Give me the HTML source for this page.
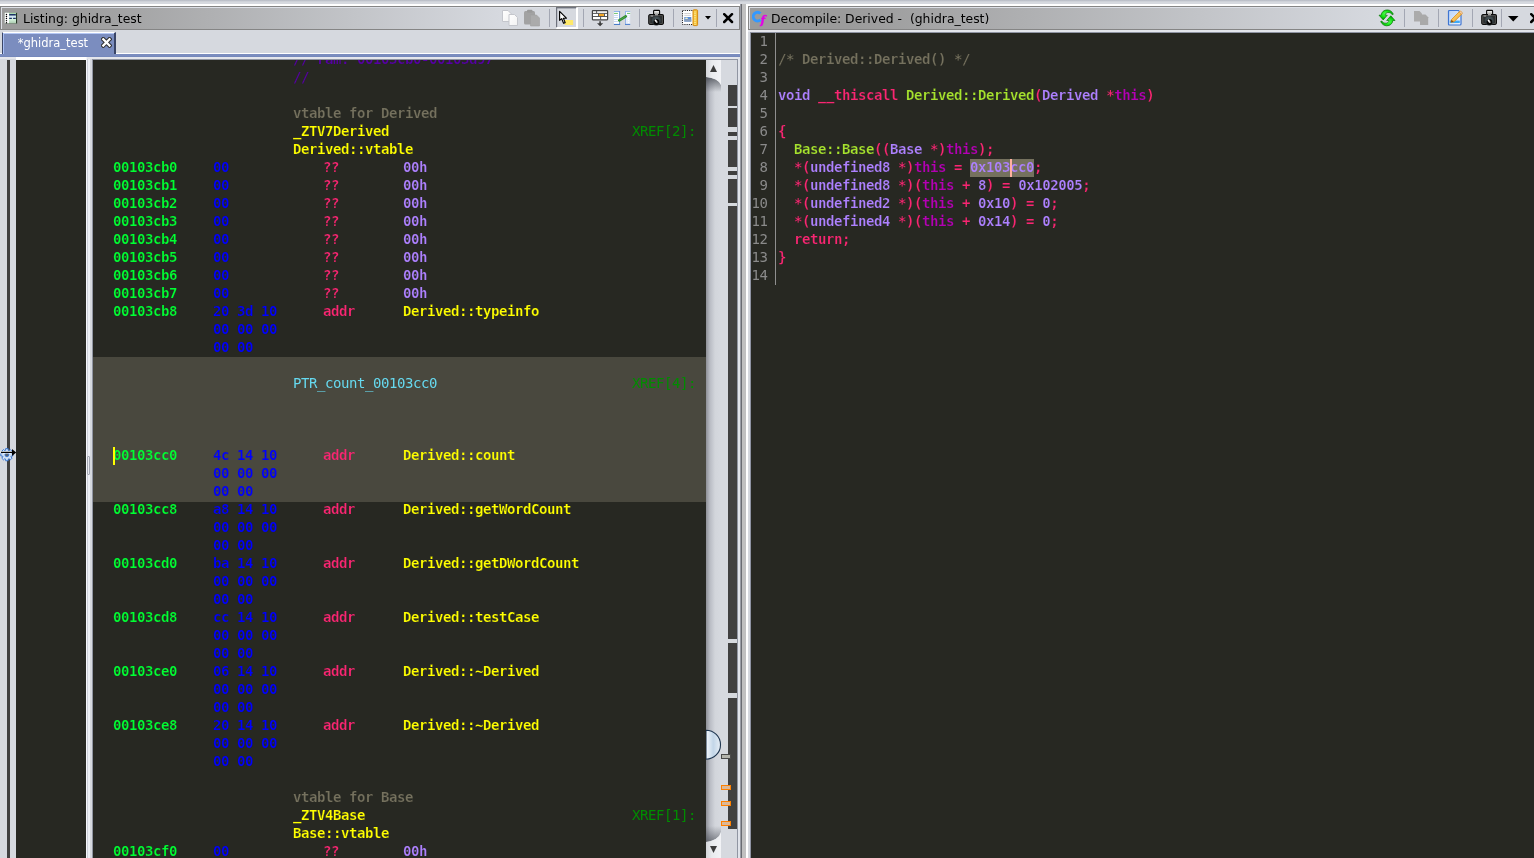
<!DOCTYPE html>
<html><head><meta charset="utf-8"><title>Ghidra</title>
<style>
*{margin:0;padding:0;box-sizing:border-box}
html,body{width:1534px;height:858px;overflow:hidden;background:#d6d9df}
body{position:relative;font-family:"DejaVu Sans","Liberation Sans",sans-serif;font-size:12.4px;color:#000}
.a{position:absolute}
.tx{will-change:transform}
.mono{font-family:"DejaVu Sans Mono","Liberation Mono",monospace;font-size:14px;letter-spacing:-0.4287px;font-weight:bold;white-space:pre;-webkit-text-stroke:0.22px #272822;paint-order:fill stroke}
.hb{-webkit-text-stroke-color:#49483e}
.ht{-webkit-text-stroke-color:#75715e}
.row{position:absolute;left:0;width:613px;height:18px;line-height:18px}
.row span{position:absolute;top:0}
.g{color:#00ff33}.b{color:#0000ff}.p{color:#f92672}.v{color:#ae81ff}.y{color:#ffff00}
.c{color:#75715e}.x{color:#008c00;font-weight:normal;-webkit-text-stroke:0}.l{color:#66d9ef;font-weight:normal;-webkit-text-stroke:0}.dp{color:#5600a4}
.dl{position:absolute;left:0;height:18px;line-height:18px}
.ln{position:absolute;width:18px;text-align:right;font-weight:normal;color:#8a8a8a;left:-1.6px;-webkit-text-stroke:0}
.k{color:#ae81ff}.f{color:#a6e22e}.t{color:#b400b4}.s{color:#f92672}
.hl{background:#75715e}
</style></head><body><div id="root" class="a" style="left:0;top:0;width:1534px;height:858px;will-change:transform">
<!-- top strip -->
<div class="a" style="left:0;top:0;width:1534px;height:4px;background:linear-gradient(#b4b8c2,#d6d9df 2px)"></div>
<div class="a" style="left:0;top:4px;width:1534px;height:2px;background:#fff"></div>

<!-- LEFT title bar -->
<div class="a" style="left:0;top:6px;width:740px;height:24px;border:1px solid #858585;background:linear-gradient(90deg,#9b9b9b 0,#9b9b9b 60px,#d6d9df 500px)"></div>
<div class="a" style="left:1px;top:7px;width:738px;height:1px;background:#dcdfe6"></div>
<div class="a" style="left:1px;top:7px;width:1px;height:22px;background:#dcdfe6"></div>
<svg class="a" style="left:4px;top:12px" width="14" height="12" viewBox="0 0 14 12"><defs><linearGradient id="lg" x1="0" x2="0" y1="0" y2="1"><stop offset="0" stop-color="#a6d8a8"/><stop offset="0.6" stop-color="#d6f4de"/><stop offset="1" stop-color="#a8c8ac"/></linearGradient></defs><rect x="0.8" y="0.8" width="12.300" height="10.800" fill="url(#lg)"/><rect x="0.8" y="0.8" width="4.2" height="10.8" fill="#fff"/><rect x="5.2" y="2" width="6.6" height="1.7" fill="#1c2f66"/><rect x="5.2" y="3.7" width="6.6" height="2.1" fill="#cfe4f6"/><rect x="5.2" y="5.8" width="2.7" height="1.2" fill="#1c2f66"/><rect x="9.1" y="5.8" width="2.7" height="1.2" fill="#1c2f66"/><rect x="12" y="0.8" width="1.1" height="10.8" fill="#243524"/><rect x="0.8" y="11.1" width="12.3" height="0.6" fill="#6a786a"/><circle cx="2.45" cy="2.45" r="0.72" fill="#000"/><circle cx="2.45" cy="4.51" r="0.72" fill="#000"/><circle cx="2.45" cy="6.57" r="0.72" fill="#000"/><circle cx="2.45" cy="8.63" r="0.72" fill="#000"/><circle cx="2.45" cy="10.69" r="0.72" fill="#000"/></svg>
<div class="a" style="left:23px;top:10px;height:18px;line-height:18px">Listing: ghidra_test</div>
<svg class="a" style="left:501px;top:9px" width="18" height="18" viewBox="0 0 18 18"><defs><linearGradient id="pg" x1="0" y1="0" x2="1" y2="1"><stop offset="0" stop-color="#fff"/><stop offset="1" stop-color="#f2f2f2"/></linearGradient></defs><path d="M1.5 1.5 h5.5 l3 3 v8 h-8.5 z" fill="url(#pg)" stroke="#c4c6cc" stroke-width="1" stroke-linejoin="round"/><path d="M8 5.5 h5.5 l3 3 v8 h-8.5 z" fill="url(#pg)" stroke="#c4c6cc" stroke-width="1" stroke-linejoin="round"/></svg><svg class="a" style="left:523px;top:9px" width="18" height="18" viewBox="0 0 18 18"><rect x="1" y="2" width="11" height="13.5" rx="1.5" fill="#a2a2a2"/><rect x="4" y="0.8" width="5.5" height="3" rx="1" fill="#9a9a9a"/><path d="M7.5 6 h6 l3 3 v8 h-9 z" fill="#ababab" stroke="#a0a0a0" stroke-width="0.6"/></svg><div class="a" style="left:549px;top:9px;width:1px;height:18px;background:#a3a7b3"></div><svg class="a" style="left:556px;top:7px" width="22" height="22" viewBox="0 0 22 22"><rect x="0" y="0" width="22" height="22" fill="#d6d9df"/><rect x="0" y="0" width="20.5" height="1.4" fill="#6e727c"/><rect x="0" y="0" width="1.2" height="21" fill="#6e727c"/><rect x="0.3" y="20" width="21.7" height="2" fill="#fff"/><rect x="20" y="0.6" width="2" height="21.4" fill="#fff"/><rect x="8.7" y="13" width="8.4" height="5" fill="#ffe96a"/><path d="M3.6 4.4 L3.6 13.3 L5.7 11.7 L7.6 16.3 L9.2 15.6 L7.4 11.2 L10.4 11.2 Z" fill="#fff" stroke="#000" stroke-width="1.15" stroke-linejoin="round"/></svg><div class="a" style="left:583px;top:9px;width:1px;height:18px;background:#a3a7b3"></div><svg class="a" style="left:591px;top:9px" width="18" height="18" viewBox="0 0 18 18"><rect x="1.4" y="1.6" width="15.2" height="9.2" rx="0.5" fill="#fff" stroke="#444" stroke-width="1.2"/><rect x="1.5" y="3.9" width="15" height="0.9" fill="#444"/><rect x="1.5" y="7.1" width="15" height="0.9" fill="#444"/><rect x="5.2" y="1.5" width="0.9" height="2.6" fill="#444"/><rect x="7" y="4.6" width="0.9" height="2.6" fill="#444"/><rect x="13" y="4.6" width="0.9" height="2.6" fill="#444"/><rect x="9.2" y="7.8" width="0.9" height="2.6" fill="#444"/><rect x="8" y="4.9" width="4.9" height="2.1" fill="#f5a623"/><path d="M8.3 12.2 h1.6 v2 h2.3 l-3.1 3 l-3.1 -3 h2.3 z" fill="#3c3c3c"/></svg><svg class="a" style="left:613px;top:10px" width="18" height="16" viewBox="0 0 18 16"><rect x="0.9" y="1" width="6.2" height="14" rx="0.8" fill="#fff"/><rect x="0.9" y="1" width="6.2" height="1" fill="#8fb4ea"/><rect x="6.2" y="1.3" width="0.9" height="13.4" fill="#5b8ad0"/><rect x="0.9" y="13.9" width="6.2" height="1.1" fill="#4a7cc8"/><rect x="1" y="2.9" width="3.9" height="1" fill="#6cc06c"/><rect x="1" y="5.2" width="3.900" height="0.800" fill="#bcd0f0"/><rect x="1" y="7.2" width="3.900" height="0.800" fill="#bcd0f0"/><rect x="1" y="9.2" width="3.900" height="0.800" fill="#bcd0f0"/><rect x="1" y="11.2" width="3.900" height="0.800" fill="#bcd0f0"/><rect x="12" y="1" width="5.2" height="14" rx="0.8" fill="#e6eefb"/><rect x="12" y="1" width="5.2" height="1" fill="#9bbcee"/><rect x="12" y="1.3" width="0.9" height="13.4" fill="#8fb0e8"/><rect x="12" y="13.9" width="5.2" height="1.1" fill="#5585d0"/><rect x="13" y="2" width="4.2" height="2.6" fill="#fff"/><rect x="14" y="2.9" width="3.2" height="1" fill="#6cc06c"/><rect x="15" y="5.9" width="1" height="1" fill="#fff"/><rect x="15" y="7.9" width="1" height="1" fill="#fff"/><rect x="15" y="9.9" width="1" height="1" fill="#fff"/><rect x="15" y="11.9" width="1" height="1" fill="#fff"/><path d="M6.3 10.400 L12.700 6.400" stroke="#2e8b2e" stroke-width="2.700" stroke-linecap="round"/><path d="M6.8 10.1 L12.2 6.7" stroke="#58b058" stroke-width="0.8" stroke-dasharray="1.2 0.9" stroke-linecap="round"/></svg><div class="a" style="left:639px;top:9px;width:1px;height:18px;background:#a3a7b3"></div><svg class="a" style="left:648px;top:9px" width="17" height="18" viewBox="0 0 17 18"><defs><radialGradient id="ln" cx="0.5" cy="0.35" r="0.75"><stop offset="0" stop-color="#4a565b"/><stop offset="0.55" stop-color="#394347"/><stop offset="1" stop-color="#14181a"/></radialGradient><linearGradient id="fl" x1="0" x2="0" y1="0" y2="1"><stop offset="0" stop-color="#fff"/><stop offset="1" stop-color="#8a8a86"/></linearGradient></defs><rect x="5.6" y="1.4" width="6" height="5" rx="0.8" fill="url(#fl)" stroke="#0a0a0a" stroke-width="1.1"/><rect x="0.8" y="5.700" width="14.600" height="9.600" rx="1.2" fill="#2c2f30" stroke="#0a0a0a" stroke-width="1.2"/><rect x="1.8" y="6.7" width="12.6" height="7.6" fill="none" stroke="#5c5c5a" stroke-width="0.7"/><rect x="7" y="5.3" width="3" height="0.9" fill="#e4e4e4"/><rect x="2.6" y="6.6" width="2.6" height="0.8" fill="#d8d8d4"/><circle cx="8.3" cy="11.9" r="4.7" fill="url(#ln)"/><circle cx="8.4" cy="13" r="2.9" fill="#050505"/><ellipse cx="8.2" cy="12.4" rx="0.9" ry="1.9" transform="rotate(-40 8.2 12.4)" fill="#dcdcdc"/><circle cx="7.5" cy="11.4" r="0.8" fill="#fff"/></svg><div class="a" style="left:673px;top:9px;width:1px;height:18px;background:#a3a7b3"></div><svg class="a" style="left:681px;top:9px" width="18" height="18" viewBox="0 0 18 18"><rect x="1.5" y="1.5" width="11" height="14" fill="#fff" stroke="#222" stroke-width="1" stroke-dasharray="1.1 1.1"/><rect x="3.3" y="4" width="6.5" height="0.9" fill="#d0d0d0"/><rect x="3.3" y="5.9" width="6.5" height="0.9" fill="#d0d0d0"/><rect x="3.3" y="8" width="7" height="4.6" fill="#5b8fd8"/><rect x="3.3" y="10.2" width="7" height="2.4" fill="#8b9fbb"/><ellipse cx="5.5" cy="9.2" rx="1.6" ry="0.8" fill="#f2f2c8"/><rect x="12" y="0.8" width="4.6" height="15.8" rx="0.8" fill="#f5c23a" stroke="#d48a14" stroke-width="1"/><rect x="13.2" y="2.6" width="1.6" height="0.8" fill="#fff3b0"/><rect x="13.2" y="4.35" width="1.6" height="0.8" fill="#fff3b0"/><rect x="13.2" y="6.1" width="1.6" height="0.8" fill="#fff3b0"/><rect x="13.2" y="7.85" width="1.6" height="0.8" fill="#fff3b0"/><rect x="13.2" y="9.6" width="1.6" height="0.8" fill="#fff3b0"/><rect x="13.2" y="11.35" width="1.6" height="0.8" fill="#fff3b0"/><rect x="13.2" y="13.1" width="1.6" height="0.8" fill="#fff3b0"/><rect x="13.2" y="14.85" width="1.6" height="0.8" fill="#fff3b0"/></svg><svg class="a" style="left:705px;top:16px" width="6" height="3.5" viewBox="0 0 6 3.5"><path d="M0 0 h6 l-3.0 3.5 z" fill="#000"/></svg><div class="a" style="left:716px;top:9px;width:1px;height:18px;background:#a3a7b3"></div><svg class="a" style="left:723px;top:13px" width="11" height="11" viewBox="0 0 11 11"><path d="M1.2 1.2 L9 9 M9 1.2 L1.2 9" stroke="#000" stroke-width="2.5" stroke-linecap="round"/></svg>

<!-- tab row -->
<div class="a" style="left:0;top:53px;width:740px;height:1px;background:#fff"></div>
<div class="a" style="left:2px;top:32px;width:114px;height:22px;background:#7b8dbf;border-left:1px solid #3a4566;border-right:2px solid #3a4566;border-top:1px solid #fff"></div>
<div class="a" style="left:3px;top:33px;width:111px;height:1px;background:#b5c8f5"></div>
<div class="a" style="left:3px;top:33px;width:1px;height:21px;background:#a8c0f8"></div>
<div class="a" style="left:0;top:54px;width:740px;height:3px;background:linear-gradient(#7b8dbf,#7b8dbf 2px,#6f83b8)"></div>
<div class="a" style="left:0;top:57px;width:740px;height:2px;background:#e4e6ec"></div>
<div class="a" style="left:17.7px;top:34px;height:18px;line-height:18px;font-size:11.5px;color:#fff">*ghidra_test</div>
<svg class="a" style="left:101px;top:37px" width="11" height="11" viewBox="0 0 11 11"><path d="M2.300 2.300 L8.500 8.500 M8.500 2.300 L2.300 8.500" stroke="#2e2e2e" stroke-width="4.300" stroke-linecap="square"/><path d="M2.300 2.300 L8.500 8.500 M8.500 2.300 L2.300 8.500" stroke="#fff" stroke-width="2.300" stroke-linecap="square"/></svg>

<!-- listing left margin -->
<div class="a" style="left:7px;top:60px;width:3px;height:798px;background:#404040"></div>
<svg class="a" style="left:0px;top:447px" width="17" height="15" viewBox="0 0 17 15"><path d="M5.67 1.62 L8.13 1.62 L8.26 3.31 L9.05 3.63 L10.33 2.53 L12.07 4.27 L10.97 5.55 L11.29 6.34 L12.98 6.47 L12.98 8.93 L11.29 9.06 L10.97 9.85 L12.07 11.13 L10.33 12.87 L9.05 11.77 L8.26 12.09 L8.13 13.78 L5.67 13.78 L5.54 12.09 L4.75 11.77 L3.47 12.87 L1.73 11.13 L2.83 9.85 L2.51 9.06 L0.82 8.93 L0.82 6.47 L2.51 6.34 L2.83 5.55 L1.73 4.27 L3.47 2.53 L4.75 3.63 L5.54 3.31 Z" fill="#cfe0f5" stroke="#2f6fd0" stroke-width="0.9" stroke-linejoin="round"/><circle cx="6.9" cy="7.7" r="1.9" fill="#5c6470" stroke="#2f6fd0" stroke-width="0.9"/><path d="M0.6 5.4 H13" stroke="#fff" stroke-width="2.6" opacity="0.75"/><path d="M1 5.4 H13" stroke="#000" stroke-width="1.25"/><path d="M12 1.9 L16.2 5.4 L12 8.9 Z" fill="#000"/></svg>
<div class="a" style="left:16px;top:57px;width:70px;height:3px;background:#fff"></div>
<div class="a" style="left:16px;top:60px;width:70px;height:798px;background:#272822"></div>
<div class="a" style="left:86px;top:57px;width:1px;height:801px;background:#f4f5fa"></div>
<div class="a" style="left:87px;top:59px;width:1px;height:799px;background:#cdd0da"></div>
<div class="a" style="left:88px;top:59px;width:2px;height:799px;background:#eceef4"></div>
<div class="a" style="left:87px;top:456px;width:3px;height:19px;background:#e9ebf1;border:1px solid #a4a8b4;border-radius:1px"></div>
<!-- listing -->
<div class="a" style="left:92px;top:59px;width:646px;height:799px;background:#9095a2"></div>
<div class="a" style="left:93px;top:60px;width:613px;height:798px;background:#272822;overflow:hidden">
<div class="a" style="left:0;top:297px;width:613px;height:145px;background:#49483e"></div>
<div class="row mono" style="top:-10px"><span class="dp" style="left:200px">// ram: 00103cb0-00103d97</span></div>
<div class="row mono" style="top:8px"><span class="dp" style="left:200px">//</span></div>
<div class="row mono" style="top:44px"><span class="c" style="left:200px">vtable for Derived</span></div>
<div class="row mono" style="top:62px"><span class="y" style="left:200px">_ZTV7Derived</span><span class="x" style="left:539px">XREF[2]:</span></div>
<div class="row mono" style="top:80px"><span class="y" style="left:200px">Derived::vtable</span></div>
<div class="row mono" style="top:98px"><span class="g" style="left:20px">00103cb0</span><span class="b" style="left:120px">00</span><span class="p" style="left:230px">??</span><span class="v" style="left:310px">00h</span></div>
<div class="row mono" style="top:116px"><span class="g" style="left:20px">00103cb1</span><span class="b" style="left:120px">00</span><span class="p" style="left:230px">??</span><span class="v" style="left:310px">00h</span></div>
<div class="row mono" style="top:134px"><span class="g" style="left:20px">00103cb2</span><span class="b" style="left:120px">00</span><span class="p" style="left:230px">??</span><span class="v" style="left:310px">00h</span></div>
<div class="row mono" style="top:152px"><span class="g" style="left:20px">00103cb3</span><span class="b" style="left:120px">00</span><span class="p" style="left:230px">??</span><span class="v" style="left:310px">00h</span></div>
<div class="row mono" style="top:170px"><span class="g" style="left:20px">00103cb4</span><span class="b" style="left:120px">00</span><span class="p" style="left:230px">??</span><span class="v" style="left:310px">00h</span></div>
<div class="row mono" style="top:188px"><span class="g" style="left:20px">00103cb5</span><span class="b" style="left:120px">00</span><span class="p" style="left:230px">??</span><span class="v" style="left:310px">00h</span></div>
<div class="row mono" style="top:206px"><span class="g" style="left:20px">00103cb6</span><span class="b" style="left:120px">00</span><span class="p" style="left:230px">??</span><span class="v" style="left:310px">00h</span></div>
<div class="row mono" style="top:224px"><span class="g" style="left:20px">00103cb7</span><span class="b" style="left:120px">00</span><span class="p" style="left:230px">??</span><span class="v" style="left:310px">00h</span></div>
<div class="row mono" style="top:242px"><span class="g" style="left:20px">00103cb8</span><span class="b" style="left:120px">20 3d 10</span><span class="p" style="left:230px">addr</span><span class="y" style="left:310px">Derived::typeinfo</span></div>
<div class="row mono" style="top:260px"><span class="b" style="left:120px">00 00 00</span></div>
<div class="row mono" style="top:278px"><span class="b" style="left:120px">00 00</span></div>
<div class="row mono hb" style="top:314px"><span class="l" style="left:200px">PTR_count_00103cc0</span><span class="x" style="left:539px">XREF[4]:</span></div>
<div class="row mono hb" style="top:386px"><span class="g" style="left:20px">00103cc0</span><span class="b" style="left:120px">4c 14 10</span><span class="p" style="left:230px">addr</span><span class="y" style="left:310px">Derived::count</span></div>
<div class="row mono hb" style="top:404px"><span class="b" style="left:120px">00 00 00</span></div>
<div class="row mono hb" style="top:422px"><span class="b" style="left:120px">00 00</span></div>
<div class="row mono" style="top:440px"><span class="g" style="left:20px">00103cc8</span><span class="b" style="left:120px">a8 14 10</span><span class="p" style="left:230px">addr</span><span class="y" style="left:310px">Derived::getWordCount</span></div>
<div class="row mono" style="top:458px"><span class="b" style="left:120px">00 00 00</span></div>
<div class="row mono" style="top:476px"><span class="b" style="left:120px">00 00</span></div>
<div class="row mono" style="top:494px"><span class="g" style="left:20px">00103cd0</span><span class="b" style="left:120px">ba 14 10</span><span class="p" style="left:230px">addr</span><span class="y" style="left:310px">Derived::getDWordCount</span></div>
<div class="row mono" style="top:512px"><span class="b" style="left:120px">00 00 00</span></div>
<div class="row mono" style="top:530px"><span class="b" style="left:120px">00 00</span></div>
<div class="row mono" style="top:548px"><span class="g" style="left:20px">00103cd8</span><span class="b" style="left:120px">cc 14 10</span><span class="p" style="left:230px">addr</span><span class="y" style="left:310px">Derived::testCase</span></div>
<div class="row mono" style="top:566px"><span class="b" style="left:120px">00 00 00</span></div>
<div class="row mono" style="top:584px"><span class="b" style="left:120px">00 00</span></div>
<div class="row mono" style="top:602px"><span class="g" style="left:20px">00103ce0</span><span class="b" style="left:120px">06 14 10</span><span class="p" style="left:230px">addr</span><span class="y" style="left:310px">Derived::~Derived</span></div>
<div class="row mono" style="top:620px"><span class="b" style="left:120px">00 00 00</span></div>
<div class="row mono" style="top:638px"><span class="b" style="left:120px">00 00</span></div>
<div class="row mono" style="top:656px"><span class="g" style="left:20px">00103ce8</span><span class="b" style="left:120px">20 14 10</span><span class="p" style="left:230px">addr</span><span class="y" style="left:310px">Derived::~Derived</span></div>
<div class="row mono" style="top:674px"><span class="b" style="left:120px">00 00 00</span></div>
<div class="row mono" style="top:692px"><span class="b" style="left:120px">00 00</span></div>
<div class="row mono" style="top:728px"><span class="c" style="left:200px">vtable for Base</span></div>
<div class="row mono" style="top:746px"><span class="y" style="left:200px">_ZTV4Base</span><span class="x" style="left:539px">XREF[1]:</span></div>
<div class="row mono" style="top:764px"><span class="y" style="left:200px">Base::vtable</span></div>
<div class="row mono" style="top:782px"><span class="g" style="left:20px">00103cf0</span><span class="b" style="left:120px">00</span><span class="p" style="left:230px">??</span><span class="v" style="left:310px">00h</span></div>

<div class="a" style="left:20px;top:387px;width:2px;height:18px;background:#ffff00"></div>
</div>
<!-- scrollbar -->
<div class="a" style="left:706px;top:60px;width:31px;height:798px;background:#d6d9df"></div>
<div class="a" style="left:706px;top:60px;width:15px;height:798px;background:linear-gradient(90deg,#8e9097,#b9bcc4 4px,#d2d5db 9px,#d6d9df)"></div>
<svg class="a" style="left:706px;top:60px" width="15" height="32" viewBox="0 0 15 32"><defs><linearGradient id="sb" x1="0" x2="1" y1="0" y2="0"><stop offset="0" stop-color="#d4d6da"/><stop offset="0.4" stop-color="#e9ebee"/><stop offset="1" stop-color="#f2f3f6"/></linearGradient></defs><defs><linearGradient id="sh" x1="0" x2="0" y1="0" y2="1"><stop offset="0" stop-color="#3c4048" stop-opacity="0.75"/><stop offset="1" stop-color="#3c4048" stop-opacity="0"/></linearGradient></defs><path d="M0 17 Q12 18 15 25 V32 H0 Z" fill="url(#sh)" transform="translate(0,0)"/><path d="M0 0 H15 V25 Q12 18 0 17 Z" fill="url(#sb)"/><path d="M7.5 5 L11 12 H4 Z" fill="#3c3c3c"/></svg>
<svg class="a" style="left:706px;top:826px" width="15" height="32" viewBox="0 0 15 32"><defs><linearGradient id="sh2" x1="0" x2="0" y1="1" y2="0"><stop offset="0" stop-color="#3c4048" stop-opacity="0.6"/><stop offset="1" stop-color="#3c4048" stop-opacity="0"/></linearGradient></defs><path d="M0 16 Q13 14 15 6 V0 H0 Z" fill="url(#sh2)"/><path d="M0 32 H15 V6 Q13 14 0 16 Z" fill="url(#sb)"/><path d="M4 20 H11 L7.5 27 Z" fill="#3c3c3c"/></svg>
<svg class="a" style="left:706px;top:729px" width="16" height="32" viewBox="0 0 16 32"><defs><linearGradient id="th" x1="0" x2="1" y1="0" y2="0"><stop offset="0" stop-color="#f4f8fc"/><stop offset="0.5" stop-color="#c3d6e8"/><stop offset="1" stop-color="#e8eff6"/></linearGradient></defs><path d="M0 1.2 A14.5 14.5 0 0 1 0 30.200 Z" fill="url(#th)" stroke="#1f3650" stroke-width="1.1"/></svg>
<!-- overview -->
<div class="a" style="left:728px;top:85px;width:9px;height:21px;background:#404040"></div><div class="a" style="left:728px;top:108px;width:9px;height:19px;background:#404040"></div><div class="a" style="left:728px;top:132px;width:9px;height:4px;background:#404040"></div><div class="a" style="left:728px;top:140px;width:9px;height:27px;background:#404040"></div><div class="a" style="left:728px;top:171px;width:9px;height:4px;background:#404040"></div><div class="a" style="left:728px;top:179px;width:9px;height:24px;background:#404040"></div><div class="a" style="left:728px;top:206px;width:9px;height:433px;background:#404040"></div><div class="a" style="left:728px;top:643px;width:9px;height:50px;background:#404040"></div><div class="a" style="left:728px;top:698px;width:9px;height:131px;background:#404040"></div>
<div class="a" style="left:721px;top:754px;width:10px;height:5px;background:#b4b4ac;border:1px solid #4a4a4a"></div><div class="a" style="left:721px;top:785px;width:10px;height:5px;background:#dcb898;border:1px solid #ff8000"></div><div class="a" style="left:721px;top:801px;width:10px;height:5px;background:#dcb898;border:1px solid #ff8000"></div><div class="a" style="left:721px;top:821px;width:10px;height:5px;background:#dcb898;border:1px solid #ff8000"></div>
<div class="a" style="left:738px;top:57px;width:2px;height:801px;background:#e0e3ea"></div>

<!-- split divider -->
<div class="a" style="left:740px;top:4px;width:1px;height:854px;background:#9a9da5"></div>
<div class="a" style="left:741px;top:4px;width:1px;height:854px;background:#6a6c72"></div>
<div class="a" style="left:742px;top:4px;width:4px;height:854px;background:#c0c0c0"></div>
<div class="a" style="left:746px;top:4px;width:2px;height:854px;background:#fff"></div>

<!-- RIGHT title bar -->
<div class="a" style="left:748px;top:6px;width:800px;height:24px;border:1px solid #858585;background:linear-gradient(90deg,#9b9b9b 0,#9b9b9b 100px,#d6d9df 630px)"></div>
<div class="a" style="left:749px;top:7px;width:785px;height:1px;background:#dcdfe6"></div>
<div class="a" style="left:749px;top:7px;width:1px;height:22px;background:#dcdfe6"></div>
<svg class="a" style="left:752px;top:9px" width="18" height="19" viewBox="0 0 18 19"><path d="M8.5 4.500 A4.200 4.400 0 1 0 8.500 10.700" fill="none" stroke="#3399ff" stroke-width="2.900"/><text x="8.6" y="15" font-family="DejaVu Serif, Liberation Serif, serif" font-style="italic" font-weight="bold" font-size="11" fill="#e600e6" stroke="#e600e6" stroke-width="0.35">f</text></svg>
<div class="a" style="left:771px;top:10px;height:18px;line-height:18px;white-space:pre">Decompile: Derived -  (ghidra_test)</div>
<svg class="a" style="left:1378px;top:9px" width="18" height="18" viewBox="0 0 18 18"><defs><radialGradient id="gr" cx="0.45" cy="0.4" r="0.6"><stop offset="0" stop-color="#58ff58"/><stop offset="0.55" stop-color="#10e010"/><stop offset="1" stop-color="#009000"/></radialGradient></defs><path d="M1 6.2 L5.2 10.9 L9.3 6.2 L7.1 6.2 C7.1 4.300 9 3.300 11 3.500 C12.500 3.700 13.500 4.500 14.300 5.700 L15.300 5.200 C14.200 2.500 12 1 9.400 0.900 C6 0.800 3.400 3 3.200 6.200 Z" fill="url(#gr)" stroke="#067a06" stroke-width="0.7" stroke-linejoin="round"/><path d="M1 6.2 L5.2 10.9 L9.3 6.2 L7.1 6.2 C7.1 4.300 9 3.300 11 3.500 C12.500 3.700 13.500 4.500 14.300 5.700 L15.300 5.200 C14.200 2.500 12 1 9.400 0.900 C6 0.800 3.400 3 3.200 6.200 Z" transform="rotate(180 9 8.85)" fill="url(#gr)" stroke="#067a06" stroke-width="0.7" stroke-linejoin="round"/></svg><div class="a" style="left:1404px;top:9px;width:1px;height:18px;background:#a3a7b3"></div><svg class="a" style="left:1413px;top:10px" width="16" height="16" viewBox="0 0 16 16"><path d="M1 1 h5.5 l2.5 2.5 v8 h-8 z" fill="#ababab"/><path d="M7 4.6 h5.5 l2.7 2.7 v7.7 h-8.2 z" fill="#a9a9a9"/></svg><div class="a" style="left:1438px;top:9px;width:1px;height:18px;background:#a3a7b3"></div><svg class="a" style="left:1447px;top:9px" width="17" height="18" viewBox="0 0 17 18"><defs><linearGradient id="ed" x1="0" y1="0" x2="1" y2="1"><stop offset="0" stop-color="#b9d3f7"/><stop offset="1" stop-color="#eef5ff"/></linearGradient><linearGradient id="pc" x1="0" y1="0" x2="1" y2="1"><stop offset="0" stop-color="#ffe27a"/><stop offset="1" stop-color="#f0a030"/></linearGradient></defs><path d="M1.5 2.5 q0 -1 1 -1 h9 l2.5 2.5 v11 q0 1 -1 1 h-10.5 q-1 0 -1 -1 z" fill="url(#ed)" stroke="#3f76d2" stroke-width="1.2"/><rect x="2.8" y="11.6" width="10" height="2.4" fill="#3fa9f5"/><path d="M4 13.2 L4.6 10.4 L12.6 2.4 L15 4.8 L7 12.8 Z" fill="url(#pc)" stroke="#d88a1c" stroke-width="0.8" stroke-linejoin="round"/><path d="M4 13.2 L4.5 10.8 L6.6 12.8 Z" fill="#8a4a10"/><path d="M12 3 L14.4 5.4 L15.2 4.6 Q15.6 3.6 14.6 2.7 Q13.6 1.8 12.8 2.2 Z" fill="#f3c9a0" stroke="#d88a1c" stroke-width="0.5"/></svg><div class="a" style="left:1472px;top:9px;width:1px;height:18px;background:#a3a7b3"></div><svg class="a" style="left:1481px;top:9px" width="17" height="18" viewBox="0 0 17 18"><defs><radialGradient id="ln" cx="0.5" cy="0.35" r="0.75"><stop offset="0" stop-color="#4a565b"/><stop offset="0.55" stop-color="#394347"/><stop offset="1" stop-color="#14181a"/></radialGradient><linearGradient id="fl" x1="0" x2="0" y1="0" y2="1"><stop offset="0" stop-color="#fff"/><stop offset="1" stop-color="#8a8a86"/></linearGradient></defs><rect x="5.6" y="1.4" width="6" height="5" rx="0.8" fill="url(#fl)" stroke="#0a0a0a" stroke-width="1.1"/><rect x="0.8" y="5.700" width="14.600" height="9.600" rx="1.2" fill="#2c2f30" stroke="#0a0a0a" stroke-width="1.2"/><rect x="1.8" y="6.7" width="12.6" height="7.6" fill="none" stroke="#5c5c5a" stroke-width="0.7"/><rect x="7" y="5.3" width="3" height="0.9" fill="#e4e4e4"/><rect x="2.6" y="6.6" width="2.6" height="0.8" fill="#d8d8d4"/><circle cx="8.3" cy="11.9" r="4.7" fill="url(#ln)"/><circle cx="8.4" cy="13" r="2.9" fill="#050505"/><ellipse cx="8.2" cy="12.4" rx="0.9" ry="1.9" transform="rotate(-40 8.2 12.4)" fill="#dcdcdc"/><circle cx="7.5" cy="11.4" r="0.8" fill="#fff"/></svg><div class="a" style="left:1501px;top:9px;width:1px;height:18px;background:#a3a7b3"></div><svg class="a" style="left:1508px;top:16px" width="10.5" height="5.5" viewBox="0 0 10.5 5.5"><path d="M0 0 h10.5 l-5.25 5.5 z" fill="#000"/></svg><svg class="a" style="left:1530px;top:13px" width="11" height="11" viewBox="0 0 11 11"><path d="M1.2 1.2 L9 9 M9 1.2 L1.2 9" stroke="#000" stroke-width="2.5" stroke-linecap="round"/></svg>

<!-- decompiler -->
<div class="a" style="left:748px;top:30px;width:786px;height:2px;background:#e4e6ec"></div>
<div class="a" style="left:750px;top:32px;width:784px;height:826px;background:#8f94a3"></div>
<div class="a" style="left:751px;top:33px;width:783px;height:825px;background:#272822;overflow:hidden">
<div class="a" style="left:24px;top:0;width:1px;height:252px;background:#8f8f8f"></div>
<div class="a" style="left:219px;top:126px;width:64px;height:18px;background:#75715e"></div>
<div class="ln mono" style="top:-1px;height:18px;line-height:18px">1</div><div class="dl mono" style="top:-1px;left:27px"></div>
<div class="ln mono" style="top:17px;height:18px;line-height:18px">2</div><div class="dl mono" style="top:17px;left:27px"><span class="c">/* Derived::Derived() */</span></div>
<div class="ln mono" style="top:35px;height:18px;line-height:18px">3</div><div class="dl mono" style="top:35px;left:27px"></div>
<div class="ln mono" style="top:53px;height:18px;line-height:18px">4</div><div class="dl mono" style="top:53px;left:27px"><span class="k">void</span> <span class="s">__thiscall</span> <span class="f">Derived::Derived</span><span class="s">(</span><span class="k">Derived</span> <span class="s">*</span><span class="t">this</span><span class="s">)</span></div>
<div class="ln mono" style="top:71px;height:18px;line-height:18px">5</div><div class="dl mono" style="top:71px;left:27px"></div>
<div class="ln mono" style="top:89px;height:18px;line-height:18px">6</div><div class="dl mono" style="top:89px;left:27px"><span class="s">{</span></div>
<div class="ln mono" style="top:107px;height:18px;line-height:18px">7</div><div class="dl mono" style="top:107px;left:27px">  <span class="f">Base::Base</span><span class="s">((</span><span class="k">Base</span><span class="s"> *)</span><span class="t">this</span><span class="s">);</span></div>
<div class="ln mono" style="top:125px;height:18px;line-height:18px">8</div><div class="dl mono" style="top:125px;left:27px">  <span class="s">*(</span><span class="k">undefined8</span><span class="s"> *)</span><span class="t">this</span><span class="s"> = </span><span class="k ht">0x103cc0</span><span class="s">;</span></div>
<div class="ln mono" style="top:143px;height:18px;line-height:18px">9</div><div class="dl mono" style="top:143px;left:27px">  <span class="s">*(</span><span class="k">undefined8</span><span class="s"> *)(</span><span class="t">this</span><span class="s"> + </span><span class="k">8</span><span class="s">) = </span><span class="k">0x102005</span><span class="s">;</span></div>
<div class="ln mono" style="top:161px;height:18px;line-height:18px">10</div><div class="dl mono" style="top:161px;left:27px">  <span class="s">*(</span><span class="k">undefined2</span><span class="s"> *)(</span><span class="t">this</span><span class="s"> + </span><span class="k">0x10</span><span class="s">) = </span><span class="k">0</span><span class="s">;</span></div>
<div class="ln mono" style="top:179px;height:18px;line-height:18px">11</div><div class="dl mono" style="top:179px;left:27px">  <span class="s">*(</span><span class="k">undefined4</span><span class="s"> *)(</span><span class="t">this</span><span class="s"> + </span><span class="k">0x14</span><span class="s">) = </span><span class="k">0</span><span class="s">;</span></div>
<div class="ln mono" style="top:197px;height:18px;line-height:18px">12</div><div class="dl mono" style="top:197px;left:27px">  <span class="s">return;</span></div>
<div class="ln mono" style="top:215px;height:18px;line-height:18px">13</div><div class="dl mono" style="top:215px;left:27px"><span class="s">}</span></div>
<div class="ln mono" style="top:233px;height:18px;line-height:18px">14</div><div class="dl mono" style="top:233px;left:27px"></div>

<div class="a" style="left:259px;top:126px;width:2px;height:18px;background:#ffb0a0"></div>
</div>
</div></body></html>
